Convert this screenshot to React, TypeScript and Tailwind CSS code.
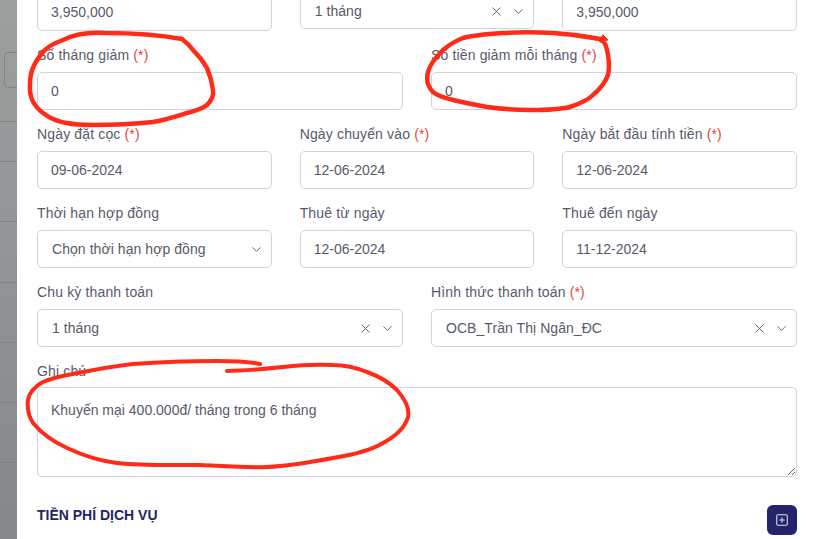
import { ChevronDown, SquarePlus, X } from "lucide-react";

const inputCls =
  "w-full h-[38px] rounded-[5px] border border-[#d2d2de] bg-white pl-[13px] pr-3 text-[14px] text-[#585a68] outline-none";

const labelCls = "block h-[21px] mb-[6px] text-[14px] leading-[21px] tracking-[0.15px] text-[#585a6c]";

const Field = ({ label, value, required }: { label: string; value: string; required?: boolean }) => (
  <div className="mb-[14px]">
    <label className={labelCls}>
      {label} {required && <span className="text-[#e2473f]">(*)</span>}
    </label>
    <input className={inputCls} defaultValue={value} readOnly />
  </div>
);

const SelectBox = ({ value, clear = true, short }: { value: string; clear?: boolean; short?: boolean }) => (
  <div
    className={`w-full ${short ? "h-[37px]" : "h-[38px]"} rounded-[5px] border border-[#d2d2de] bg-white pl-[14px] pr-[7px] pt-[1px] flex items-center text-[14px] tracking-[0.06px] text-[#585a68]`}
  >
    <span className="flex-1">{value}</span>
    {clear && <X size={15} strokeWidth={1.5} className="mr-[7px] text-[#5c5e6e]" />}
    <ChevronDown size={15} strokeWidth={1.5} className="text-[#5c5e6e]" />
  </div>
);

const SelectField = ({
  label,
  value,
  required,
  clear,
}: {
  label: string;
  value: string;
  required?: boolean;
  clear?: boolean;
}) => (
  <div className="mb-[14px]">
    <label className={labelCls}>
      {label} {required && <span className="text-[#e2473f]">(*)</span>}
    </label>
    <SelectBox value={value} clear={clear} />
  </div>
);

// red pen marks drawn over the screenshot
const Annotations = () => (
  <svg className="absolute left-0 top-0 pointer-events-none" width="813" height="539" viewBox="0 0 813 539" fill="none">
    <g stroke="#ff2a17" strokeLinecap="round" strokeLinejoin="round">
      <path
        strokeWidth="4.5"
        d="M182 39C160 35 135 33 105 33C88 32 75 34 63 40C52 44 47 47 43 52C35 62 30 70 30 84C29 98 34 106 43 113C52 120 60 122 67 123C76 125 85 125 93 125C115 125 135 124 153 122C165 120 177 116 187 113C195 111 202 109 207 105C212 100 214 96 213 90C212 82 210 75 207 68C203 61 198 55 193 50C190 46 186 42 182 39"
      />
      <path
        strokeWidth="4.5"
        d="M600 39C585 36 570 34 553 33C535 32 520 32 503 33C488 34 474 35 463 38C455 41 449 45 443 50C436 57 430 64 428 72C426 80 428 87 433 92C439 97 446 98 453 100C465 103 476 105 487 107C502 109 516 110 530 110C545 110 558 110 570 107C579 104 587 101 593 95C600 89 605 83 608 75C610 66 609 57 606 46C605 43 603 41 600 39"
      />
      <path strokeWidth="1" d="M603 35L608 40L600 42Z" fill="#ff2a17" />
      <path
        strokeWidth="4"
        d="M260 364C245 361 232 361 217 361C190 361 160 362 133 364C115 366 98 369 83 372C68 375 53 377 43 382C34 387 29 393 28 400C27 409 29 417 33 423C42 434 54 442 67 448C82 455 100 461 117 463C145 466 172 465 200 465C222 466 245 468 267 467C290 466 312 462 333 458C352 455 370 451 383 443C396 436 405 428 408 417C410 408 404 398 397 390C389 382 378 376 367 372C357 368 345 365 333 365C316 364 300 365 283 367C264 369 246 371 227 371"
      />
    </g>
  </svg>
);

export default function App() {
  return (
    <div
      className="relative flex h-[539px] w-[813px] overflow-hidden bg-white"
      style={{ fontFamily: '"Liberation Sans", Arial, sans-serif' }}
    >
      {/* Page behind the modal */}
      <div className="w-[17px] shrink-0 bg-gradient-to-b from-[#9d9f9f] to-[#85888a]">
        <div className="h-[122px] border-b border-[#7f8183] pt-[52px]">
          <div className="ml-[4px] h-[36px] border border-r-0 border-[#7f8183] rounded-l-[5px]" />
        </div>
        <div className="h-[40px] border-b border-[#7f8183]" />
        <div className="h-[60px] border-b border-[#7f8183]" />
        <div className="h-[61px] border-b border-[#7f8183]" />
        <div className="h-[60px] border-b border-[#7f8183]" />
        <div className="h-[60px] border-b border-[#7f8183]" />
        <div className="h-[60px] border-b border-[#7f8183]" />
      </div>

      {/* Modal body */}
      <div className="flex-1 pl-[20px] pr-[16px] bg-white">
        <div className="-mt-[7px] grid grid-cols-3 gap-x-7 mb-[14px]">
          <input className={`${inputCls} bg-[#eeeeee]`} defaultValue="3,950,000" readOnly />
          <div className="-mt-[1px]">
            <SelectBox value="1 tháng" short />
          </div>
          <input className={inputCls} defaultValue="3,950,000" readOnly />
        </div>

        <div className="grid grid-cols-2 gap-x-7">
          <Field label="Số tháng giảm" value="0" required />
          <Field label="Số tiền giảm mỗi tháng" value="0" required />
        </div>

        <div className="grid grid-cols-3 gap-x-7">
          <Field label="Ngày đặt cọc" value="09-06-2024" required />
          <Field label="Ngày chuyển vào" value="12-06-2024" required />
          <Field label="Ngày bắt đầu tính tiền" value="12-06-2024" required />
        </div>

        <div className="grid grid-cols-3 gap-x-7">
          <SelectField label="Thời hạn hợp đồng" value="Chọn thời hạn hợp đồng" clear={false} />
          <Field label="Thuê từ ngày" value="12-06-2024" />
          <Field label="Thuê đến ngày" value="11-12-2024" />
        </div>

        <div className="grid grid-cols-2 gap-x-7">
          <SelectField label="Chu kỳ thanh toán" value="1 tháng" />
          <SelectField label="Hình thức thanh toán" value="OCB_Trần Thị Ngân_ĐC" required />
        </div>

        <div>
          <label className="block h-[21px] mb-[5px] text-[14px] leading-[21px] tracking-[0.15px] text-[#585a6c]">
            Ghi chú
          </label>
          <textarea
            className="block w-full h-[90px] rounded-[5px] border border-[#d2d2de] bg-white px-[13px] py-[12px] text-[14px] leading-[21px] text-[#585a68] outline-none"
            defaultValue="Khuyến mại 400.000đ/ tháng trong 6 tháng"
            readOnly
          />
        </div>

        <div className="mt-[28px] flex items-start justify-between">
          <h3 className="text-[14px] leading-[21px] font-bold text-[#24245f]">TIỀN PHÍ DỊCH VỤ</h3>
          <button className="flex h-[30px] w-[30px] items-center justify-center rounded-[6px] bg-[#24246a] text-[#e4e4f2]">
            <SquarePlus size={14} strokeWidth={1.75} />
          </button>
        </div>
      </div>

      <Annotations />
    </div>
  );
}
